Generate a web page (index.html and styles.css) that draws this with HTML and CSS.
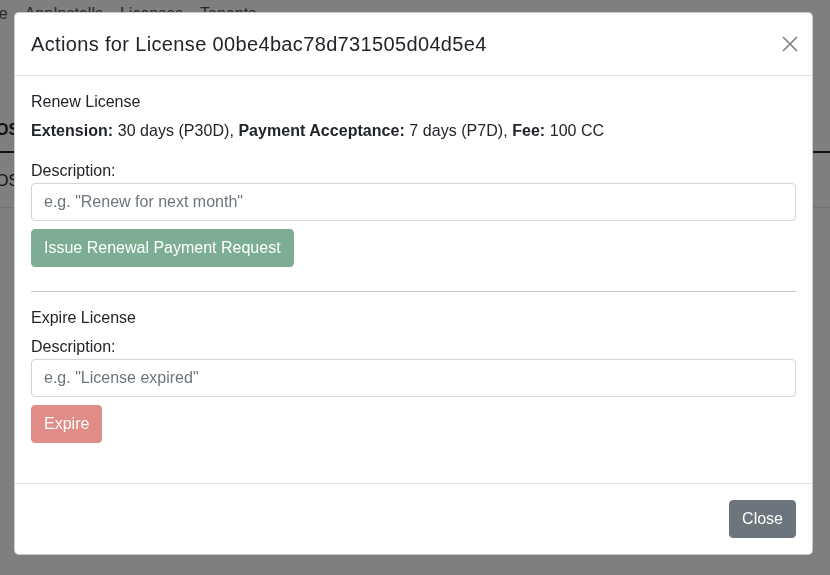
FILE: index.html
```html
<!DOCTYPE html>
<html lang="en">
<head>
<meta charset="utf-8">
<title>Licenses</title>
<link rel="stylesheet" href="styles.css">
</head>
<body>
<div class="page">
  <nav class="topnav">
    <span class="nav-link">Home</span>
    <span class="nav-link">AppInstalls</span>
    <span class="nav-link">Licenses</span>
    <span class="nav-link">Tenants</span>
  </nav>
  <table class="table">
    <thead><tr><th>OS</th><th>Status</th><th>Expires</th></tr></thead>
    <tbody><tr><td>OS</td><td>Active</td><td>2024-01-01</td></tr></tbody>
  </table>
</div>
<div class="backdrop"></div>
<div class="modal">
  <div class="modal-header">
    <h5 class="modal-title">Actions for License 00be4bac78d731505d04d5e4</h5>
    <button class="btn-close" aria-label="Close">
      <svg width="16" height="16" viewBox="0 0 16 16"><path d="M1 1 L15 15 M15 1 L1 15" stroke="#000" stroke-width="1.6" fill="none"/></svg>
    </button>
  </div>
  <div class="modal-body">
    <h6 class="section-title">Renew License</h6>
    <p class="terms"><b>Extension:</b> 30 days (P30D), <b>Payment Acceptance:</b> 7 days (P7D), <b>Fee:</b> 100 CC</p>
    <label class="label">Description:</label>
    <input class="form-control" placeholder="e.g. &quot;Renew for next month&quot;">
    <button class="btn btn-success">Issue Renewal Payment Request</button>
    <hr class="divider">
    <h6 class="section-title">Expire License</h6>
    <label class="label">Description:</label>
    <input class="form-control" placeholder="e.g. &quot;License expired&quot;">
    <button class="btn btn-danger last">Expire</button>
  </div>
  <div class="modal-footer">
    <button class="btn btn-secondary">Close</button>
  </div>
</div>
</body>
</html>
```
FILE: styles.css
```css
* { box-sizing: border-box; }
html, body { margin: 0; padding: 0; }
body {
  font-family: "Liberation Sans", Arial, sans-serif;
  font-size: 16px;
  line-height: 1.5;
  color: #212529;
  background: #fff;
  width: 830px;
  height: 575px;
  overflow: hidden;
}
.page { position: relative; }
.topnav {
  display: flex;
  gap: 17px;
  padding: 2px 0 0 0;
  margin-left: -35px;
  height: 100px;
}
.nav-link { color: #555; }
.table {
  border-collapse: collapse;
  width: 900px;
  margin-left: -12px;
  margin-top: 6px;
}
.table th, .table td { text-align: left; padding: 12px 8px; }
.table th { border-bottom: 2px solid #212529; padding-bottom: 9px; }
.table td { border-bottom: 1px solid #dee2e6; padding: 16px 8px 14px; }
.backdrop {
  position: fixed;
  inset: 0;
  background: rgba(0,0,0,0.5);
}
.modal {
  position: absolute;
  left: 14px;
  top: 12px;
  width: 799px;
  background: #fff;
  border: 1px solid rgba(0,0,0,0.2);
  border-radius: 5px;
  display: flex;
  flex-direction: column;
}
.modal-header {
  display: flex;
  align-items: center;
  justify-content: space-between;
  padding: 16px;
  border-bottom: 1px solid #dee2e6;
}
.modal-title {
  margin: 0;
  font-size: 20px;
  font-weight: 500;
  line-height: 1.5;
  letter-spacing: 0.35px;
}
.btn-close {
  width: 24px;
  height: 24px;
  border: 0;
  background: transparent;
  padding: 4px;
  opacity: 0.5;
  margin-right: -6px;
  display: flex;
  align-items: center;
  justify-content: center;
}
.modal-body {
  padding: 16px;
  display: flex;
  flex-direction: column;
  align-items: flex-start;
}
.section-title {
  margin: 0 0 8px;
  font-size: 16px;
  font-weight: 500;
  line-height: 1.2;
}
.terms { margin: 0 0 16px; letter-spacing: 0.04px; }
.label { display: block; }
.form-control {
  width: 100%;
  height: 38px;
  padding: 6px 12px;
  font: inherit;
  color: #212529;
  border: 1px solid #ced4da;
  border-radius: 4px;
  background: #fff;
}
.form-control::placeholder { color: #6c757d; opacity: 1; }
.btn {
  font: inherit;
  height: 38px;
  padding: 6px 12px;
  border: 1px solid transparent;
  border-radius: 4px;
  color: #fff;
  margin-top: 8px;
}
.btn-success { background: #7dae94; border-color: #7dae94; }
.btn-danger { background: #e08c87; border-color: #e08c87; }
.btn-danger.last { margin-bottom: 24px; }
.btn-secondary { background: #6c757d; border-color: #6c757d; margin: 4px; }
.divider {
  width: 100%;
  border: 0;
  border-top: 1px solid #c8c8c8;
  margin: 24px 0 16px;
}
.modal-footer {
  display: flex;
  justify-content: flex-end;
  padding: 12px;
  border-top: 1px solid #dee2e6;
}
```
